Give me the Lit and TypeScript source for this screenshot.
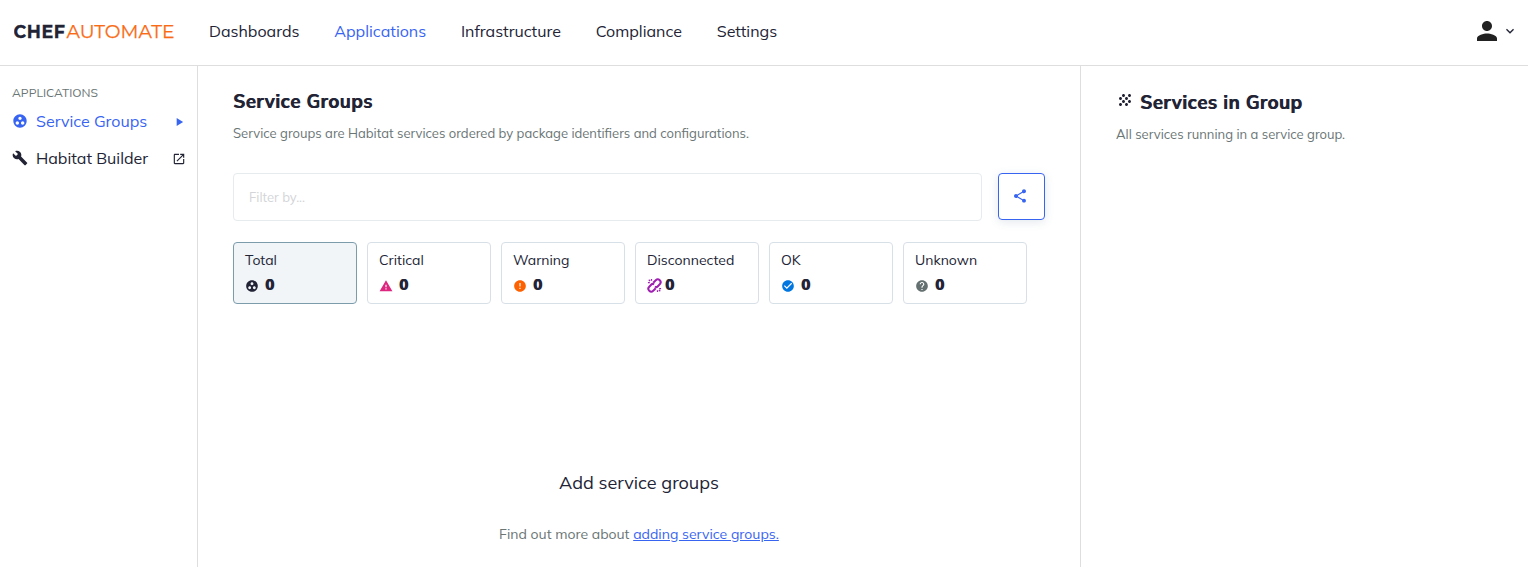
import { LitElement, html, css, svg } from "lit";
import type { SVGTemplateResult } from "lit";
import { customElement, property } from "lit/decorators.js";

const ICONS: Record<string, SVGTemplateResult> = {
  groups: svg`<path d="M12 2C6.48 2 2 6.48 2 12s4.48 10 10 10 10-4.48 10-10S17.52 2 12 2zM8 17.5c-1.38 0-2.5-1.12-2.5-2.5s1.12-2.5 2.5-2.5 2.5 1.12 2.5 2.5-1.12 2.5-2.5 2.5zM9.5 8c0-1.38 1.12-2.5 2.5-2.5s2.5 1.12 2.5 2.5-1.12 2.5-2.5 2.5S9.500 9.380 9.500 8zm6.500 9.500c-1.380 0-2.500-1.120-2.500-2.500s1.120-2.500 2.500-2.500 2.500 1.120 2.500 2.500-1.120 2.500-2.500 2.500z"/>`,
  build: svg`<path d="M22.700 19l-9.100-9.100c.9-2.300.4-5-1.500-6.900-2-2-5-2.400-7.400-1.300L9 6 6 9 1.600 4.700C.4 7.100.9 10.100 2.900 12.100c1.900 1.900 4.600 2.400 6.900 1.500l9.100 9.100c.4.4 1 .4 1.400 0l2.300-2.300c.5-.4.5-1.100.1-1.400z"/>`,
  launch: svg`<path d="M19 19H5V5h7V3H5c-1.110 0-2 .9-2 2v14c0 1.100.89 2 2 2h14c1.100 0 2-.9 2-2v-7h-2v7zM14 3v2h3.590l-9.830 9.830 1.410 1.410L19 6.410V10h2V3h-7z"/>`,
  play: svg`<path d="M8 5v14l11-7z"/>`,
  person: svg`<path d="M12 12c2.210 0 4-1.790 4-4s-1.790-4-4-4-4 1.790-4 4 1.790 4 4 4zm0 2c-2.670 0-8 1.340-8 4v2h16v-2c0-2.660-5.330-4-8-4z"/>`,
  chevron: svg`<path d="M7.410 8.590L12 13.170l4.590-4.580L18 10l-6 6-6-6z"/>`,
  share: svg`<path d="M18 16.080c-.76 0-1.440.3-1.960.77L8.910 12.700c.05-.23.09-.46.09-.7s-.04-.47-.09-.7l7.050-4.110c.54.5 1.250.81 2.040.81 1.660 0 3-1.340 3-3s-1.340-3-3-3-3 1.340-3 3c0 .24.04.47.09.7L8.040 9.810C7.500 9.310 6.790 9 6 9c-1.660 0-3 1.340-3 3s1.340 3 3 3c.79 0 1.500-.31 2.040-.81l7.120 4.160c-.05.21-.08.43-.08.65 0 1.610 1.310 2.920 2.920 2.920s2.920-1.310 2.920-2.920-1.310-2.920-2.920-2.920z"/>`,
  grain: svg`<path d="M10 12c-1.100 0-2 .9-2 2s.9 2 2 2 2-.9 2-2-.9-2-2-2zM6 8c-1.100 0-2 .9-2 2s.9 2 2 2 2-.9 2-2-.9-2-2-2zm0 8c-1.100 0-2 .9-2 2s.9 2 2 2 2-.9 2-2-.9-2-2-2zm12-8c1.100 0 2-.9 2-2s-.9-2-2-2-2 .9-2 2 .9 2 2 2zm-4 8c-1.100 0-2 .9-2 2s.9 2 2 2 2-.9 2-2-.9-2-2-2zm4-4c-1.100 0-2 .9-2 2s.9 2 2 2 2-.9 2-2-.9-2-2-2zm-4-4c-1.100 0-2 .9-2 2s.9 2 2 2 2-.9 2-2-.9-2-2-2zm-4-4c-1.100 0-2 .9-2 2s.9 2 2 2 2-.9 2-2-.9-2-2-2z"/>`,
  critical: svg`<path d="M1 21h22L12 2 1 21zm12-3h-2v-2h2v2zm0-4h-2v-4h2v4z"/>`,
  warning: svg`<path d="M12 2C6.480 2 2 6.480 2 12s4.480 10 10 10 10-4.480 10-10S17.520 2 12 2zm1 15h-2v-2h2v2zm0-4h-2V7h2v6z"/>`,
  ok: svg`<path d="M12 2C6.480 2 2 6.480 2 12s4.480 10 10 10 10-4.480 10-10S17.520 2 12 2zm-2 15l-5-5 1.410-1.410L10 14.170l7.590-7.590L19 8l-9 9z"/>`,
  unknown: svg`<path d="M12 2C6.480 2 2 6.480 2 12s4.480 10 10 10 10-4.480 10-10S17.520 2 12 2zm1 17h-2v-2h2v2zm2.070-7.750l-.9.920C13.450 12.900 13 13.500 13 15h-2v-.5c0-1.100.45-2.100 1.170-2.830l1.240-1.260c.37-.36.59-.86.59-1.410 0-1.100-.9-2-2-2s-2 .9-2 2H8c0-2.210 1.790-4 4-4s4 1.790 4 4c0 .88-.36 1.680-.93 2.250z"/>`,
  disconnected: svg`<g fill="none" stroke="currentColor" stroke-width="3.2"><path d="M10 7.500L14 3.600a4.500 4.500 0 0 1 6.400 6.400L17 13.500c-1.200 1.200-3 1.200-4.300.2"/><path d="M14 16.500L10 20.400a4.500 4.500 0 0 1-6.400-6.400L7 10.500c1.200-1.200 3-1.200 4.300-.2"/><path stroke-width="2" d="M1.500 7.200h3M7.200 1.500v3M22.500 16.800h-3M16.800 22.500v-3M2.800 2.800l2.200 2.200M21.200 21.200l-2.200-2.200"/></g>`,
};

@customElement("app-icon")
export class AppIcon extends LitElement {
  static styles = css`
    :host { display: block; flex: none; }
    svg { display: block; width: 100%; height: 100%; fill: currentColor; }
  `;
  @property() name = "";
  render() {
    return html`<svg viewBox="0 0 24 24">${ICONS[this.name]}</svg>`;
  }
}

const NAV = ["Dashboards", "Applications", "Infrastructure", "Compliance", "Settings"];
const STATUSES = [
  ["Total", "groups"],
  ["Critical", "critical"],
  ["Warning", "warning"],
  ["Disconnected", "disconnected"],
  ["OK", "ok"],
  ["Unknown", "unknown"],
];

@customElement("app-root")
export class AppRoot extends LitElement {
  static styles = css`
    :host {
      display: flex;
      flex-direction: column;
      height: 100vh;
      overflow: hidden;
      background: #fff;
      color: #222435;
      font-family: Mulish, "Open Sans", sans-serif;
      font-size: 16px;
    }
    * { box-sizing: border-box; }
    h1, h2, p { margin: 0; }
    header {
      display: flex;
      align-items: center;
      height: 66px;
      flex: none;
      padding: 0 10px 3px 14px;
      border-bottom: 1px solid #dedede;
    }
    .logo { width: 162px; height: 24px; display: block; }
    .chef { font: 700 18.5px Montserrat, Lato, sans-serif; fill: #222435; stroke: #222435; stroke-width: 0.3px; letter-spacing: 0.6px; }
    .automate { font: 400 18.5px Montserrat, Lato, sans-serif; fill: #f96c15; stroke: #f96c15; stroke-width: 0.25px; }
    nav { display: flex; gap: 34.8px; margin-left: 33px; flex: 1; line-height: 24px; }
    .blue { color: #3864f2; }
    .person { width: 30px; height: 30px; color: #222; }
    .chevron { width: 16px; height: 16px; margin-top: -1px; }
    .body { display: flex; flex: 1; min-height: 0; }
    aside { width: 198px; border-right: 1px solid #dedede; padding: 19px 11px 0 12px; }
    .caption { font-size: 12px; line-height: 16px; margin-bottom: 1px; color: #6a7575; }
    .link { display: flex; align-items: center; height: 37px; }
    .link span { flex: 1; padding-left: 8px; }
    .link app-icon { width: 16px; height: 16px; }
    .link .end { width: 14px; height: 14px; margin-top: 2px; }
    .link .arrow { width: 14px; height: 14px; margin-top: 2px; }
    main { width: 883px; padding: 22px 35px 0; border-right: 1px solid #dedede; }
    h1 { font-size: 18.5px; font-weight: 700; line-height: 27px; height: 26px; letter-spacing: 0.5px; text-shadow: 0.7px 0 currentColor; }
    .sub { font-size: 13px; line-height: 18px; color: #6a7575; margin-top: 10px; }
    .filter { display: flex; gap: 16px; margin-top: 31px; }
    .input { width: 749px; height: 48px; border: 1px solid #e6ebee; border-radius: 4px; padding-left: 15px; font-size: 13px; line-height: 47px; color: #d3d5d8; }
    .share { width: 47px; height: 47px; border: 1px solid #3864f2; border-radius: 4px; display: flex; align-items: center; justify-content: center; box-shadow: 0 2px 10px rgba(60, 90, 130, 0.14); }
    .share app-icon { width: 16px; height: 16px; margin: 0 3px 2px 0; }
    .cards { display: flex; gap: 10px; margin-top: 21px; }
    .card { width: 124px; height: 62px; border: 1px solid #d8e0e7; border-radius: 4px; padding: 8px 11px; font-size: 14px; line-height: 19px; }
    .card.groups { background: #f1f5f8; border-color: #7c9cab; }
    .count { display: flex; align-items: center; gap: 6px; margin-top: 6px; font-weight: 800; line-height: 18px; font-size: 14.5px; text-shadow: 1px 0 currentColor; }
    .count app-icon { width: 14px; height: 14px; margin-top: 1px; }
    .count .critical { color: #dc267f; }
    .count .warning { color: #fe6100; }
    .count .disconnected { color: #9f1fb1; width: 15px; margin-right: -3px; height: 15px; }
    .count .ok { color: #0076e0; }
    .count .unknown { color: #657070; }
    .empty { text-align: center; margin-top: 166px; }
    .empty h2 { font-size: 18px; font-weight: 400; line-height: 26px; }
    .empty p { font-size: 14px; line-height: 20px; margin-top: 28px; color: #6a7575; }
    .empty a { color: #3864f2; text-decoration: underline; }
    .panel { padding: 23px 0 0 35px; }
    .title { display: flex; gap: 7px; }
    .title app-icon { width: 18px; height: 18px; margin: 2px -1px 0 0; }
  `;

  render() {
    return html`
      <header>
        <svg class="logo" viewBox="0 0 162 24">
          <text class="chef" x="-0.500" y="19" textLength="52" lengthAdjust="spacingAndGlyphs">CHEF</text>
          <text class="automate" x="52.500" y="19" textLength="108" lengthAdjust="spacingAndGlyphs">AUTOMATE</text>
        </svg>
        <nav>${NAV.map((n) => html`<span class=${n === "Applications" ? "blue" : ""}>${n}</span>`)}</nav>
        <app-icon class="person" name="person"></app-icon>
        <app-icon class="chevron" name="chevron"></app-icon>
      </header>
      <div class="body">
        <aside>
          <div class="caption">APPLICATIONS</div>
          <div class="link blue">
            <app-icon name="groups"></app-icon><span>Service Groups</span><app-icon class="arrow" name="play"></app-icon>
          </div>
          <div class="link">
            <app-icon name="build"></app-icon><span>Habitat Builder</span><app-icon class="end" name="launch"></app-icon>
          </div>
        </aside>
        <main>
          <h1>Service Groups</h1>
          <p class="sub">Service groups are Habitat services ordered by package identifiers and configurations.</p>
          <div class="filter">
            <div class="input">Filter by...</div>
            <div class="share blue"><app-icon name="share"></app-icon></div>
          </div>
          <div class="cards">
            ${STATUSES.map(
              ([label, icon]) => html`<div class="card ${icon}">
                <div>${label}</div>
                <div class="count"><app-icon class=${icon} name=${icon}></app-icon>0</div>
              </div>`
            )}
          </div>
          <div class="empty">
            <h2>Add service groups</h2>
            <p>Find out more about <a>adding service groups.</a></p>
          </div>
        </main>
        <section class="panel">
          <div class="title"><app-icon name="grain"></app-icon><h1>Services in Group</h1></div>
          <p class="sub">All services running in a service group.</p>
        </section>
      </div>
    `;
  }
}
